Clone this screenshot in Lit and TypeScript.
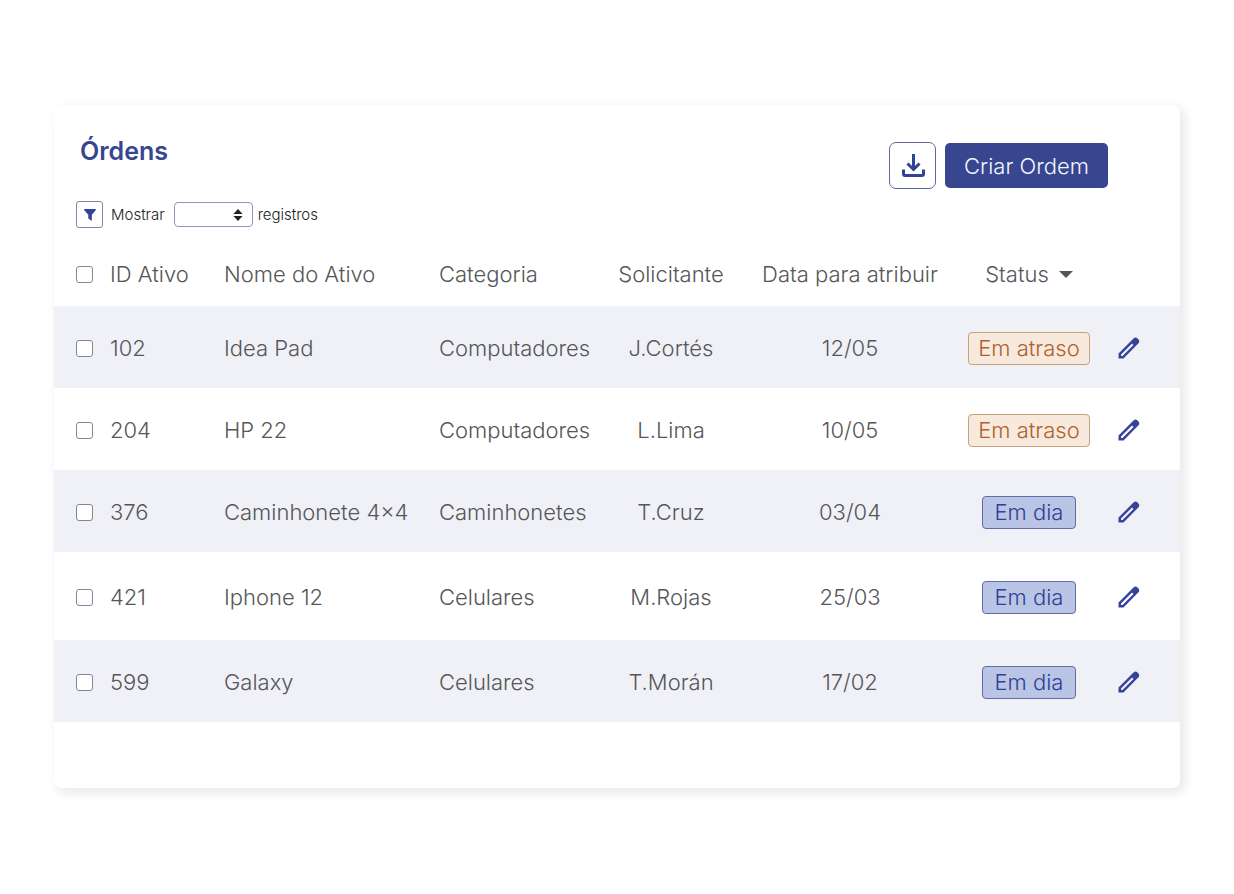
import { LitElement, html, css } from "lit";
import { customElement, state } from "lit/decorators.js";

interface Order {
  id: string;
  name: string;
  category: string;
  requester: string;
  date: string;
  late: boolean;
  tall?: boolean;
}

const ORDERS: Order[] = [
  { id: "102", name: "Idea Pad", category: "Computadores", requester: "J.Cortés", date: "12/05", late: true },
  { id: "204", name: "HP 22", category: "Computadores", requester: "L.Lima", date: "10/05", late: true },
  { id: "376", name: "Caminhonete 4x4", category: "Caminhonetes", requester: "T.Cruz", date: "03/04", late: false },
  { id: "421", name: "Iphone 12", category: "Celulares", requester: "M.Rojas", date: "25/03", late: false, tall: true },
  { id: "599", name: "Galaxy", category: "Celulares", requester: "T.Morán", date: "17/02", late: false },
];

@customElement("app-root")
export class AppRoot extends LitElement {
  @state() private orders = ORDERS;

  static styles = css`
    :host {
      display: block;
      box-sizing: border-box;
      min-height: 100vh;
      padding: 105px 54px;
      background: #fff;
      font-family: Inter, "Liberation Sans", sans-serif;
      color: #565658;
    }
    * {
      box-sizing: border-box;
    }
    button,
    select,
    input {
      margin: 0;
      font: inherit;
    }
    button {
      padding: 0;
      display: inline-flex;
      align-items: center;
      justify-content: center;
      cursor: pointer;
    }
    svg {
      display: block;
    }
    .card {
      padding: 32px 0 66px;
      border-radius: 8px;
      background: #fff;
      box-shadow: 4px 4px 10px 2px rgba(0, 0, 0, 0.08);
    }
    .header {
      display: flex;
      justify-content: space-between;
      align-items: flex-start;
      padding: 0 72px 0 26px;
    }
    .title {
      margin: 0;
      font-size: 25px;
      line-height: 28px;
      font-weight: 600;
      color: #38458f;
    }
    .actions {
      display: flex;
      align-items: center;
      gap: 9px;
      margin-top: 5px;
    }
    .download {
      width: 47px;
      height: 47px;
      border: 1px solid #5f66a3;
      border-radius: 7px;
      background: #fff;
      color: #2f439a;
    }
    .create {
      height: 45px;
      padding: 0 18px;
      border: 0;
      border-radius: 5px;
      background: #38458f;
      color: #f4f8ff;
      font-size: 22px;
      font-weight: 300;
      min-width: 163px;
    }
    .filters {
      display: flex;
      align-items: center;
      margin: 12px 22px 14px;
      font-size: 15px;
      line-height: 20px;
      font-weight: 300;
      color: #222;
    }
    .filter {
      width: 27px;
      height: 27px;
      margin-right: 8px;
      border: 1px solid #8485a0;
      border-radius: 3px;
      background: #fff;
      color: #2f439a;
    }
    .count {
      display: grid;
      align-items: center;
      width: 79px;
      margin: 0 5px 0 9px;
    }
    .count > * {
      grid-area: 1 / 1;
    }
    .count select {
      appearance: none;
      width: 100%;
      height: 25px;
      border: 1px solid #8d93c4;
      border-radius: 4px;
      background: #fff;
    }
    .count svg {
      justify-self: end;
      margin-right: 10px;
      pointer-events: none;
      color: #222;
    }
    .table {
      width: 100%;
      table-layout: fixed;
      border-collapse: collapse;
      font-size: 22px;
      line-height: 28px;
      font-weight: 300;
      text-align: left;
      white-space: nowrap;
    }
    .c-check { width: 56px; }
    .c-id { width: 114px; }
    .c-name { width: 215px; }
    .c-cat { width: 159px; }
    .c-req { width: 146px; }
    .c-date { width: 212px; }
    .c-status { width: 146px; }
    .c-edit { width: 78px; }
    th,
    td {
      padding: 0;
      font-weight: inherit;
      height: 64px;
    }
    td {
      height: 82px;
      padding-top: 2px;
    }
    .tall td {
      height: 88px;
    }
    tbody tr:nth-child(odd) {
      background: #f0f1f7;
    }
    .mid {
      text-align: center;
    }
    .pick {
      padding-left: 22px;
    }
    .pick input {
      appearance: none;
      display: block;
      width: 17px;
      height: 17px;
      border: 1px solid #85859a;
      border-radius: 3px;
      background: #fff;
    }
    .pick input:checked {
      background: #38458f;
    }
    .sort {
      border: 0;
      background: none;
      color: inherit;
      gap: 10px;
    }
    .badge {
      display: inline-block;
      height: 33px;
      padding: 0 9px;
      border: 1px solid #c9a07c;
      border-radius: 4px;
      background: #f7e9dc;
      color: #b06030;
      line-height: 30px;
      vertical-align: middle;
    }
    .badge.ok {
      padding: 0 12px;
      border-color: #616ba8;
      background: #bac5e5;
      color: #303f98;
    }
    .edit {
      width: 54px;
      height: 32px;
      border: 0;
      background: none;
      color: #36439a;
      vertical-align: middle;
    }
  `;

  render() {
    return html`
      <main class="card">
        <header class="header">
          <h1 class="title">Órdens</h1>
          <div class="actions">
            <button class="download" aria-label="Baixar">
              <svg width="24" height="24" viewBox="0 0 24 24" fill="none" stroke="currentColor" stroke-width="3">
                <path d="M12.500 0v15M6.500 9.500l6 6 6-6M2.500 15.500v4.500a1.500 1.500 0 0 0 1.500 1.500h17a1.500 1.500 0 0 0 1.500-1.500V15.500" />
              </svg>
            </button>
            <button class="create">Criar Ordem</button>
          </div>
        </header>
        <div class="filters">
          <button class="filter" aria-label="Filtrar">
            <svg width="12" height="12" viewBox="0 0 12 12" fill="currentColor">
              <path d="M.6 0h10.800q.8.600.3 1.300L7.800 5.800V12L4.300 9.500V5.800L.3 1.300Q-.2.600.6 0z" />
            </svg>
          </button>
          <label for="count">Mostrar</label>
          <span class="count">
            <select id="count"><option></option></select>
            <svg width="10" height="12" viewBox="0 0 10 12" fill="currentColor">
              <path d="M5 0l4.600 5H.4zM5 12l4.600-5H.4z" />
            </svg>
          </span>
          <span>registros</span>
        </div>
        <table class="table">
          <colgroup>
            <col class="c-check" /><col class="c-id" /><col class="c-name" /><col class="c-cat" />
            <col class="c-req" /><col class="c-date" /><col class="c-status" /><col class="c-edit" />
          </colgroup>
          <thead>
            <tr>
              <th class="pick"><input type="checkbox" aria-label="Selecionar todos" /></th>
              <th>ID Ativo</th>
              <th>Nome do Ativo</th>
              <th>Categoria</th>
              <th class="mid">Solicitante</th>
              <th class="mid">Data para atribuir</th>
              <th class="mid">
                <button class="sort">
                  Status
                  <svg width="14" height="7" viewBox="0 0 14 7" fill="currentColor"><path d="M0 0h14L7 7z" /></svg>
                </button>
              </th>
              <th></th>
            </tr>
          </thead>
          <tbody>
            ${this.orders.map(
              (o) => html`
                <tr class=${o.tall ? "tall" : ""}>
                  <td class="pick"><input type="checkbox" aria-label="Selecionar ${o.id}" /></td>
                  <td>${o.id}</td>
                  <td>${o.name}</td>
                  <td>${o.category}</td>
                  <td class="mid">${o.requester}</td>
                  <td class="mid">${o.date}</td>
                  <td class="mid">
                    <span class="badge ${o.late ? "" : "ok"}">${o.late ? "Em atraso" : "Em dia"}</span>
                  </td>
                  <td>
                    <button class="edit" aria-label="Editar ${o.id}">
                      <svg width="22" height="22" viewBox="0 0 22 22" fill="currentColor" fill-rule="evenodd">
                        <path d="M.5 21.500v-5L15.500 1.500q2-1.800 4 0l1 1q1.500 2 0 3.800L5.500 21.500zM3 19h1.500L15.500 8 14 6.500 3 17.500z" />
                      </svg>
                    </button>
                  </td>
                </tr>
              `
            )}
          </tbody>
        </table>
      </main>
    `;
  }
}
